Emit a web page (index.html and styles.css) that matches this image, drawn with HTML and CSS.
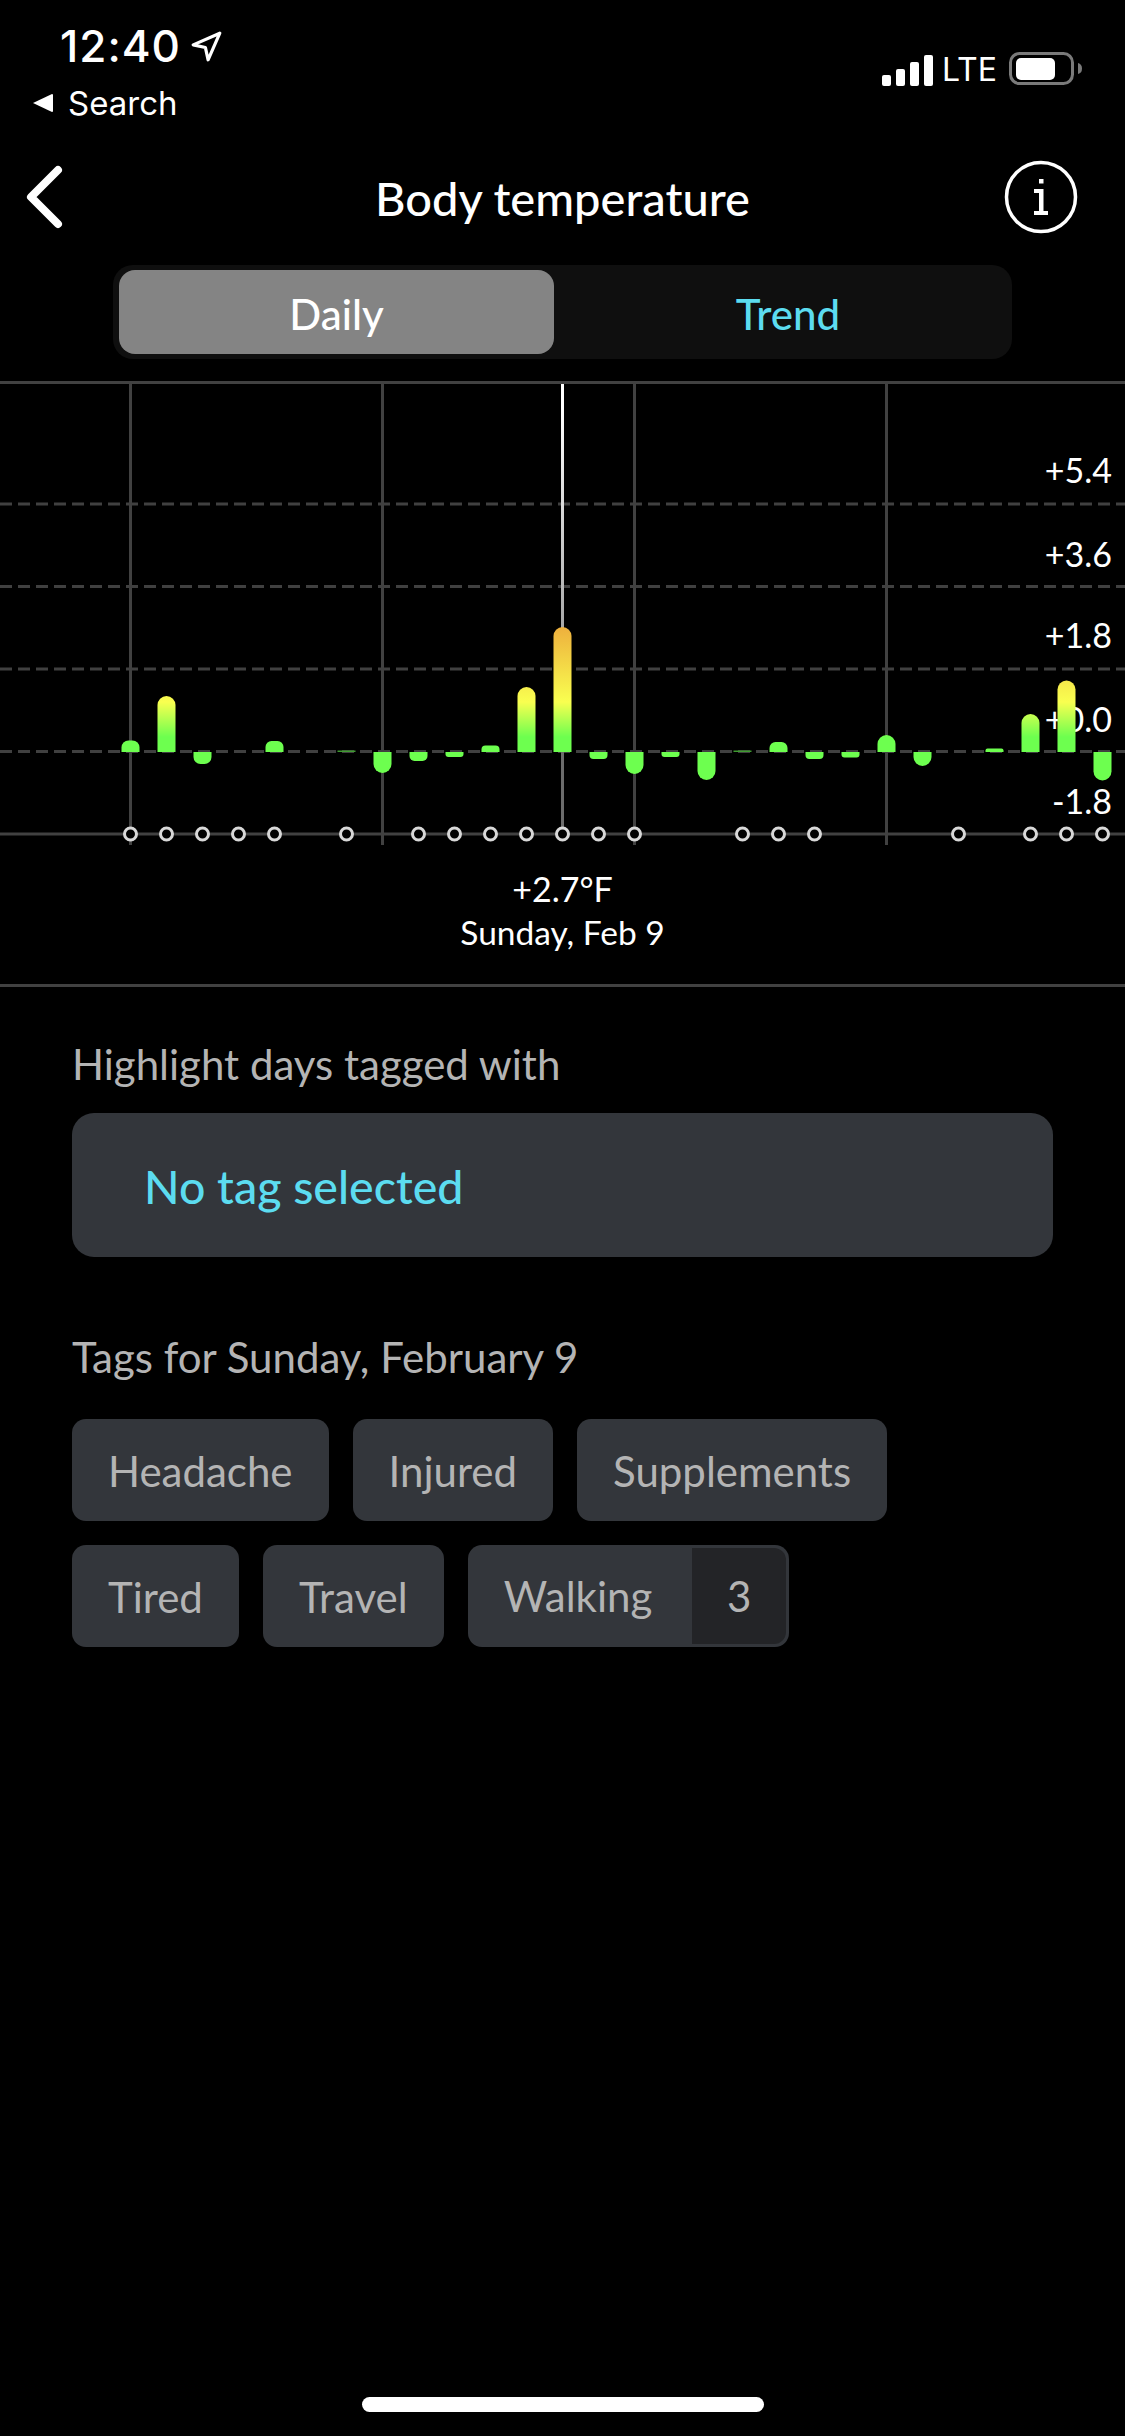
FILE: index.html
```html
<!DOCTYPE html>
<html lang="en">
<head>
    <meta charset="UTF-8">
    <meta name="viewport" content="width=device-width, initial-scale=1.0">
    <title>Body temperature</title>
    <link rel="stylesheet" href="styles.css">
</head>
<body>
    <div class="screen">
        <!-- Status bar -->
        <div class="status-bar">
            <div class="status-left">
                <div class="clock">
                    <span class="time">12:40</span>
                    <svg class="location" width="33" height="33" viewBox="0 0 31 31">
                        <path d="M28 3 L3 14 L14.5 16.5 L17 28 Z" fill="none" stroke="#fff" stroke-width="3" stroke-linejoin="round"/>
                    </svg>
                </div>
                <div class="back-app">
                    <svg width="22" height="20" viewBox="0 0 22 20">
                        <path d="M1 10 L20 1 Q21 1 21 2 V18 Q21 19 20 19 Z" fill="#fff"/>
                    </svg>
                    <span>Search</span>
                </div>
            </div>
            <div class="status-right">
                <div class="signal">
                    <span class="signal-bar s1"></span>
                    <span class="signal-bar s2"></span>
                    <span class="signal-bar s3"></span>
                    <span class="signal-bar s4"></span>
                </div>
                <span class="network">LTE</span>
                <svg width="74" height="34" viewBox="0 0 74 34">
                    <rect x="1.5" y="1.5" width="62" height="30" rx="9" fill="none" stroke="#7a7a7a" stroke-width="3"/>
                    <rect x="7" y="6" width="39" height="22" rx="5" fill="#fff"/>
                    <path d="M69 11 Q73 12 73 16.500 Q73 21 69 22 Z" fill="#7a7a7a"/>
                </svg>
            </div>
        </div>

        <!-- Nav -->
        <div class="nav">
            <svg class="nav-back" width="44" height="66" viewBox="0 0 44 66">
                <path d="M35 6 L8 33 L35 60" fill="none" stroke="#fff" stroke-width="8" stroke-linecap="round" stroke-linejoin="round"/>
            </svg>
            <h1>Body temperature</h1>
            <svg class="nav-info" width="74" height="74" viewBox="0 0 74 74">
                <circle cx="37" cy="37" r="34.500" fill="none" stroke="#fff" stroke-width="3.500"/>
                <rect x="35" y="19" width="4.500" height="4.500" fill="#fff"/>
                <path d="M30 29 H39.500 V51 H44 V55 H30 V51 H35 V33 H30 Z" fill="#fff"/>
            </svg>
        </div>

        <div class="segments">
            <div class="segment active">Daily</div>
            <div class="segment">Trend</div>
        </div>

        <!-- Chart -->
        <svg class="chart" width="1125" height="470" viewBox="0 380 1125 470">
            <defs>
                <linearGradient id="barFill" gradientUnits="userSpaceOnUse" x1="0" y1="752" x2="0" y2="627">
                    <stop offset="0.12" stop-color="#6dff4f"/>
                    <stop offset="0.4" stop-color="#f9ff50"/>
                    <stop offset="1" stop-color="#eeb03d"/>
                </linearGradient>
                <linearGradient id="lineFill" gradientUnits="userSpaceOnUse" x1="0" y1="384" x2="0" y2="627">
                    <stop offset="0.1" stop-color="#fff"/>
                    <stop offset="1" stop-color="#a8a8a8"/>
                </linearGradient>
            </defs>

            <g class="grid-solid">
                <line x1="0" y1="382.500" x2="1125" y2="382.500"/>
                <line x1="0" y1="834" x2="1125" y2="834"/>
                <line x1="130.500" y1="382" x2="130.500" y2="845"/>
                <line x1="382.500" y1="382" x2="382.500" y2="845"/>
                <line x1="634.500" y1="382" x2="634.500" y2="845"/>
                <line x1="886.500" y1="382" x2="886.500" y2="845"/>
            </g>
            <g class="grid-dash">
                <line x1="0" y1="504" x2="1125" y2="504"/>
                <line x1="0" y1="586.500" x2="1125" y2="586.500"/>
                <line x1="0" y1="669" x2="1125" y2="669"/>
                <line x1="0" y1="751.500" x2="1125" y2="751.500"/>
            </g>

            <line class="selected-low" x1="562.500" y1="752" x2="562.500" y2="834"/>
            <line x1="562.500" y1="384" x2="562.500" y2="630" stroke="url(#lineFill)" stroke-width="3"/>

            <g class="axis">
                <text x="1112" y="483">+5.4</text>
                <text x="1112" y="567">+3.6</text>
                <text x="1112" y="648">+1.8</text>
                <text x="1112" y="732">+0.0</text>
                <text x="1112" y="814">-1.8</text>
            </g>

            <g fill="url(#barFill)">
                <path d="M121.500 752v-4.500a7 7 0 0 1 7-7h4a7 7 0 0 1 7 7v4.500z"/>
                <path d="M157.500 752v-47a9 9 0 0 1 18 0v47z"/>
                <path d="M193.500 752v5a7 7 0 0 0 7 7h4a7 7 0 0 0 7-7v-5z"/>
                <path d="M265.500 752v-5a6 6 0 0 1 6-6h6a6 6 0 0 1 6 6v5z"/>
                <path d="M373.500 752v12a9 9 0 0 0 18 0v-12z"/>
                <path d="M409.500 752v4a5 5 0 0 0 5 5h8a5 5 0 0 0 5-5v-4z"/>
                <path d="M445.500 752v2a3 3 0 0 0 3 3h12a3 3 0 0 0 3-3v-2z"/>
                <path d="M481.500 752v-2.500a4 4 0 0 1 4-4h10a4 4 0 0 1 4 4v2.500z"/>
                <path d="M517.500 752v-56a9 9 0 0 1 18 0v56z"/>
                <path d="M553.500 752v-116a9 9 0 0 1 18 0v116z"/>
                <path d="M589.500 752v3a4 4 0 0 0 4 4h10a4 4 0 0 0 4-4v-3z"/>
                <path d="M625.500 752v13a9 9 0 0 0 18 0v-13z"/>
                <path d="M661.500 752v2a3 3 0 0 0 3 3h12a3 3 0 0 0 3-3v-2z"/>
                <path d="M697.500 752v19a9 9 0 0 0 18 0v-19z"/>
                <path d="M769.500 752v-4a6 6 0 0 1 6-6h6a6 6 0 0 1 6 6v4z"/>
                <path d="M805.500 752v3a4 4 0 0 0 4 4h10a4 4 0 0 0 4-4v-3z"/>
                <path d="M841.500 752v2.500a3 3 0 0 0 3 3h12a3 3 0 0 0 3-3v-2.500z"/>
                <path d="M877.500 752v-8a9 9 0 0 1 18 0v8z"/>
                <path d="M913.500 752v5a9 9 0 0 0 18 0v-5z"/>
                <path d="M985.500 752v-1.500a2 2 0 0 1 2-2h14a2 2 0 0 1 2 2v1.500z"/>
                <path d="M1021.500 752v-29a9 9 0 0 1 18 0v29z"/>
                <path d="M1057.500 752v-62.500a9 9 0 0 1 18 0v62.500z"/>
                <path d="M1093.500 752v19.500a9 9 0 0 0 18 0v-19.500z"/>
            </g>
            <g class="bar-thin">
                <rect x="337.500" y="750.500" width="18" height="1.500"/>
                <rect x="733.500" y="750.500" width="18" height="1.500"/>
            </g>

            <g class="tag-dots">
                <circle cx="130.500" cy="834" r="6"/>
                <circle cx="166.500" cy="834" r="6"/>
                <circle cx="202.500" cy="834" r="6"/>
                <circle cx="238.500" cy="834" r="6"/>
                <circle cx="274.500" cy="834" r="6"/>
                <circle cx="346.500" cy="834" r="6"/>
                <circle cx="418.500" cy="834" r="6"/>
                <circle cx="454.500" cy="834" r="6"/>
                <circle cx="490.500" cy="834" r="6"/>
                <circle cx="526.500" cy="834" r="6"/>
                <circle cx="562.500" cy="834" r="6"/>
                <circle cx="598.500" cy="834" r="6"/>
                <circle cx="634.500" cy="834" r="6"/>
                <circle cx="742.500" cy="834" r="6"/>
                <circle cx="778.500" cy="834" r="6"/>
                <circle cx="814.500" cy="834" r="6"/>
                <circle cx="958.500" cy="834" r="6"/>
                <circle cx="1030.500" cy="834" r="6"/>
                <circle cx="1066.500" cy="834" r="6"/>
                <circle cx="1102.500" cy="834" r="6"/>
            </g>
        </svg>

        <div class="readout">
            <div class="readout-value">+2.7°F</div>
            <div class="readout-date">Sunday, Feb 9</div>
        </div>

        <!-- Tags -->
        <div class="tags-section">
            <p class="section-label">Highlight days tagged with</p>
            <div class="tag-select">No tag selected</div>

            <p class="section-label tags-label">Tags for Sunday, February 9</p>
            <div class="tag-list">
                <div class="tag">Headache</div>
                <div class="tag">Injured</div>
                <div class="tag">Supplements</div>
                <div class="tag">Tired</div>
                <div class="tag">Travel</div>
                <div class="tag has-count">Walking<span class="tag-count">3</span></div>
            </div>
        </div>

        <div class="home-bar"></div>
    </div>
</body>
</html>
```

FILE: styles.css
```css
body { margin: 0; background: #000; color: #fff; font-family: "Lato", sans-serif; }
.screen { width: 1125px; height: 2436px; display: flex; flex-direction: column; overflow: hidden; }

.status-bar { display: flex; justify-content: space-between; height: 149px; box-sizing: border-box; padding: 21px 42px 0 32px; font-family: "Inter", sans-serif; }
.clock { display: flex; align-items: center; gap: 9px; padding-left: 28px; height: 50px; }
.time { font-size: 44px; font-weight: 500; line-height: 50px; letter-spacing: 1px; }
.back-app { display: flex; align-items: center; gap: 14px; height: 42px; margin-top: 11px; font-size: 33px; font-weight: 400; }
.status-right { display: flex; align-items: flex-end; height: 65px; gap: 12px; }
.signal { display: flex; align-items: flex-end; gap: 5px; height: 32px; margin-right: -3px; }
.signal-bar { width: 9px; background: #fff; border-radius: 2px; }
.s1 { height: 11px; }
.s2 { height: 17px; }
.s3 { height: 24px; }
.s4 { height: 31px; }
.network { font-size: 32px; font-weight: 400; line-height: 33px; }

.nav { display: grid; grid-template-columns: 1fr auto 1fr; align-items: center; height: 96px; padding: 0 47px; }
.nav-back { margin-left: -24px; }
.nav-info { justify-self: end; }
.nav h1 { margin: 0; padding-top: 1px; font-size: 47px; font-weight: 500; line-height: 60px; }

.segments { display: flex; width: 887px; height: 84px; margin: 20px 0 21px 113px; padding: 5px 6px; background: #0f0f0f; border-radius: 20px; }
.segment { flex: 1; display: flex; align-items: center; justify-content: center; padding: 3px 0 0 16px; font-size: 42px; font-weight: 500; color: #5cdcf0; border-radius: 16px; }
.segment.active { flex: 0 0 435px; padding-left: 0; background: #848484; color: #fff; }

.chart { display: block; flex-shrink: 0; }
.grid-solid line { stroke: #414141; stroke-width: 3; }
.grid-dash line { stroke: #404040; stroke-width: 3; stroke-dasharray: 12 6; }
.selected-low { stroke: #6c6c6c; stroke-width: 3; }
.axis text { fill: #fff; font-size: 34px; text-anchor: end; }
.bar-thin rect { fill: #3f9a30; }
.tag-dots circle { fill: #000; stroke: #d8d8d8; stroke-width: 3; }

.readout { height: 137px; box-sizing: border-box; padding-top: 18px; border-bottom: 3px solid #414141; text-align: center; }
.readout-value { font-size: 34px; line-height: 42px; }
.readout-date { font-size: 33.500px; line-height: 44px; }

.tags-section { padding: 0 72px; }
.section-label { margin: 0; font-size: 42px; line-height: 50px; color: #b4b4b4; }
.tags-section > .section-label:first-child { margin-top: 52px; }
.tag-select { display: flex; align-items: center; height: 144px; box-sizing: border-box; margin-top: 24px; padding: 2px 0 0 72px; background: #33363b; border-radius: 22px; font-size: 46.500px; font-weight: 500; color: #5cdcf0; }
.tags-label { margin-top: 75px; }
.tag-list { display: flex; flex-wrap: wrap; gap: 24px; margin-top: 37px; }
.tag { display: flex; align-items: center; height: 102px; box-sizing: border-box; padding: 2px 36px 0; background: #33363b; border-radius: 14px; font-size: 42px; color: #b4b4b4; }
.tag.has-count { padding: 0 3px 0 36px; }
.tag-count { display: flex; align-items: center; justify-content: center; width: 94px; height: 96px; margin-left: 40px; background: #232427; border-radius: 0 12px 12px 0; }

.home-bar { width: 402px; height: 15px; margin: auto auto 24px; background: #fff; border-radius: 8px; }
```
